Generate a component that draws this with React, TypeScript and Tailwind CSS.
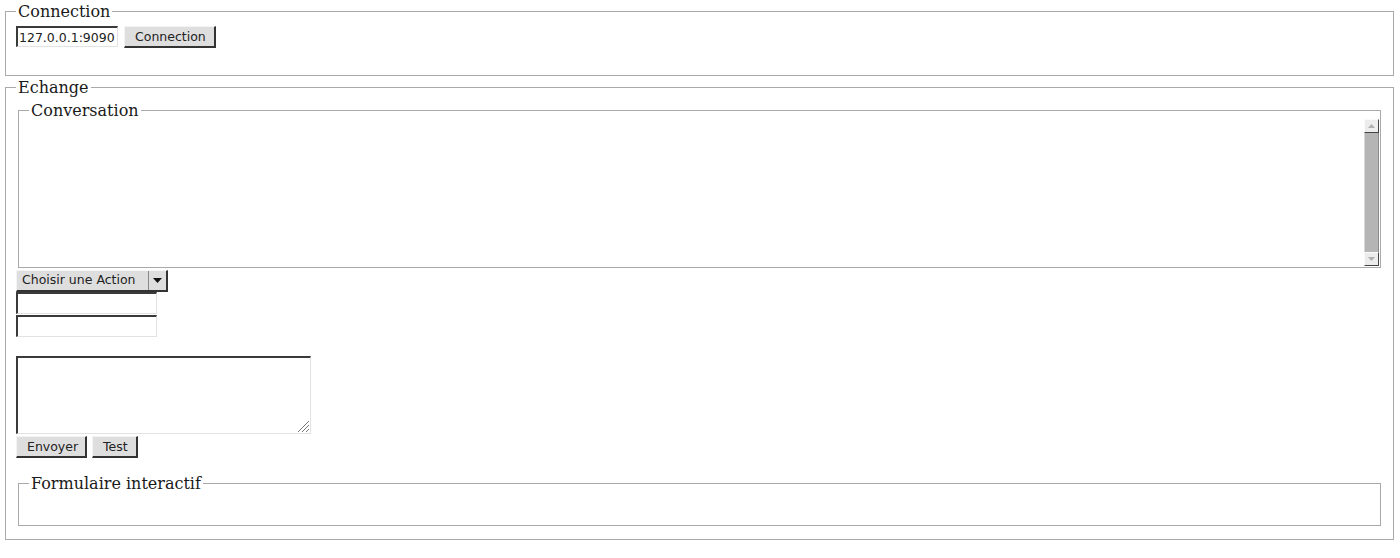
import React from 'react';

const legendCls = "px-[2px] font-['DejaVu_Serif',serif] text-[16px] leading-[23px] text-[#1a1a1a]";
const fieldCls = "border-t-2 border-l-2 border-r border-b border-t-[#3a3a3a] border-l-[#3a3a3a] border-r-[#e2e2e2] border-b-[#e2e2e2] bg-white";
const btnCls = "h-[22px] px-[10px] pt-[1px] bg-[#dedede] border-t border-l border-r-2 border-b-2 border-t-[#f4f4f4] border-l-[#f4f4f4] border-r-[#333] border-b-[#333] text-[12.5px] leading-none text-[#222]";

const ScrollArrow = ({ down }: { down?: boolean }) => (
    <div className="w-[15px] h-[14px] bg-[#ececec] border-t border-l border-t-[#fafafa] border-l-[#fafafa] border-r border-b border-r-[#444] border-b-[#444] flex items-center justify-center">
        <svg width="7" height="4" viewBox="0 0 7 4">
            {down ? <polygon points="0,0 7,0 3.5,4" fill="#b0b0b0" /> : <polygon points="0,4 7,4 3.5,0" fill="#b0b0b0" />}
        </svg>
    </div>
);

const App = () => {
    return (
        <div className="w-[1400px] h-[558px] bg-white font-['DejaVu_Sans',sans-serif] text-[#222]">
            {/* connexion au serveur */}
            <fieldset className="ml-[5px] mr-[6px] border border-[#a9a9a9] pl-[10px] pt-[3px] pb-[27px]">
                <legend className={legendCls}>Connection</legend>
                <div className="flex gap-[6px]">
                    <input
                        className={`${fieldCls} w-[102px] h-[21px] px-[1px] pt-[1px] text-[12.5px] text-[#222] outline-none`}
                        defaultValue="127.0.0.1:9090"
                    />
                    <button className={`${btnCls} w-[92px] h-[21px]`}>Connection</button>
                </div>
            </fieldset>

            {/* echange */}
            <fieldset className="ml-[5px] mr-[6px] border border-[#a9a9a9] pl-[10px] pr-[10px] pb-[13px]">
                <legend className={legendCls}>Echange</legend>

                <fieldset className="ml-[2px] mr-[2px] border border-[#a9a9a9] pl-[10px] pr-[1px] pb-[1px]">
                    <legend className={legendCls}>Conversation</legend>
                    <div className="-mt-[3px] h-[147px] flex justify-end">
                        <div className="w-[15px] flex flex-col">
                            <ScrollArrow />
                            <div className="flex-1 bg-[#b5b5b5] border-l border-r border-l-[#d8d8d8] border-r-[#8a8a8a]"></div>
                            <ScrollArrow down />
                        </div>
                    </div>
                </fieldset>

                <div className="mt-[2px] w-[152px] h-[22px] flex bg-[#dedede] border-t border-l border-t-[#f4f4f4] border-l-[#f4f4f4] border-r-2 border-b-2 border-r-[#333] border-b-[#333]">
                    <div className="flex-1 pl-[5px] flex items-center text-[12.5px]">Choisir une Action</div>
                    <div className="w-[18px] flex items-center justify-center border-l border-l-[#888]">
                        <svg width="9" height="5" viewBox="0 0 9 5">
                            <polygon points="0,0 9,0 4.5,5" fill="#111" />
                        </svg>
                    </div>
                </div>

                <div className="flex flex-col gap-[1px]">
                    <input className={`${fieldCls} w-[141px] h-[22px] outline-none`} />
                    <input className={`${fieldCls} w-[141px] h-[22px] outline-none`} />
                </div>

                <div className="mt-[19px] relative w-[295px] h-[78px]">
                    <textarea className={`${fieldCls} w-[295px] h-[78px] resize-none outline-none block`} />
                    <svg className="absolute right-[1px] bottom-[1px]" width="13" height="13" viewBox="0 0 13 13">
                        <line x1="12" y1="1" x2="1" y2="12" stroke="#777" strokeWidth="1" />
                        <line x1="12" y1="5" x2="5" y2="12" stroke="#777" strokeWidth="1" />
                        <line x1="12" y1="9" x2="9" y2="12" stroke="#777" strokeWidth="1" />
                    </svg>
                </div>

                <div className="mt-[2px] flex gap-[5px]">
                    <button className={`${btnCls} w-[71px]`}>Envoyer</button>
                    <button className={`${btnCls} w-[46px]`}>Test</button>
                </div>

                <fieldset className="mt-[14px] ml-[2px] mr-[2px] border border-[#a9a9a9] pl-[10px] h-[54px]">
                    <legend className={legendCls}>Formulaire interactif</legend>
                </fieldset>
            </fieldset>
        </div>
    );
};

export default App;
